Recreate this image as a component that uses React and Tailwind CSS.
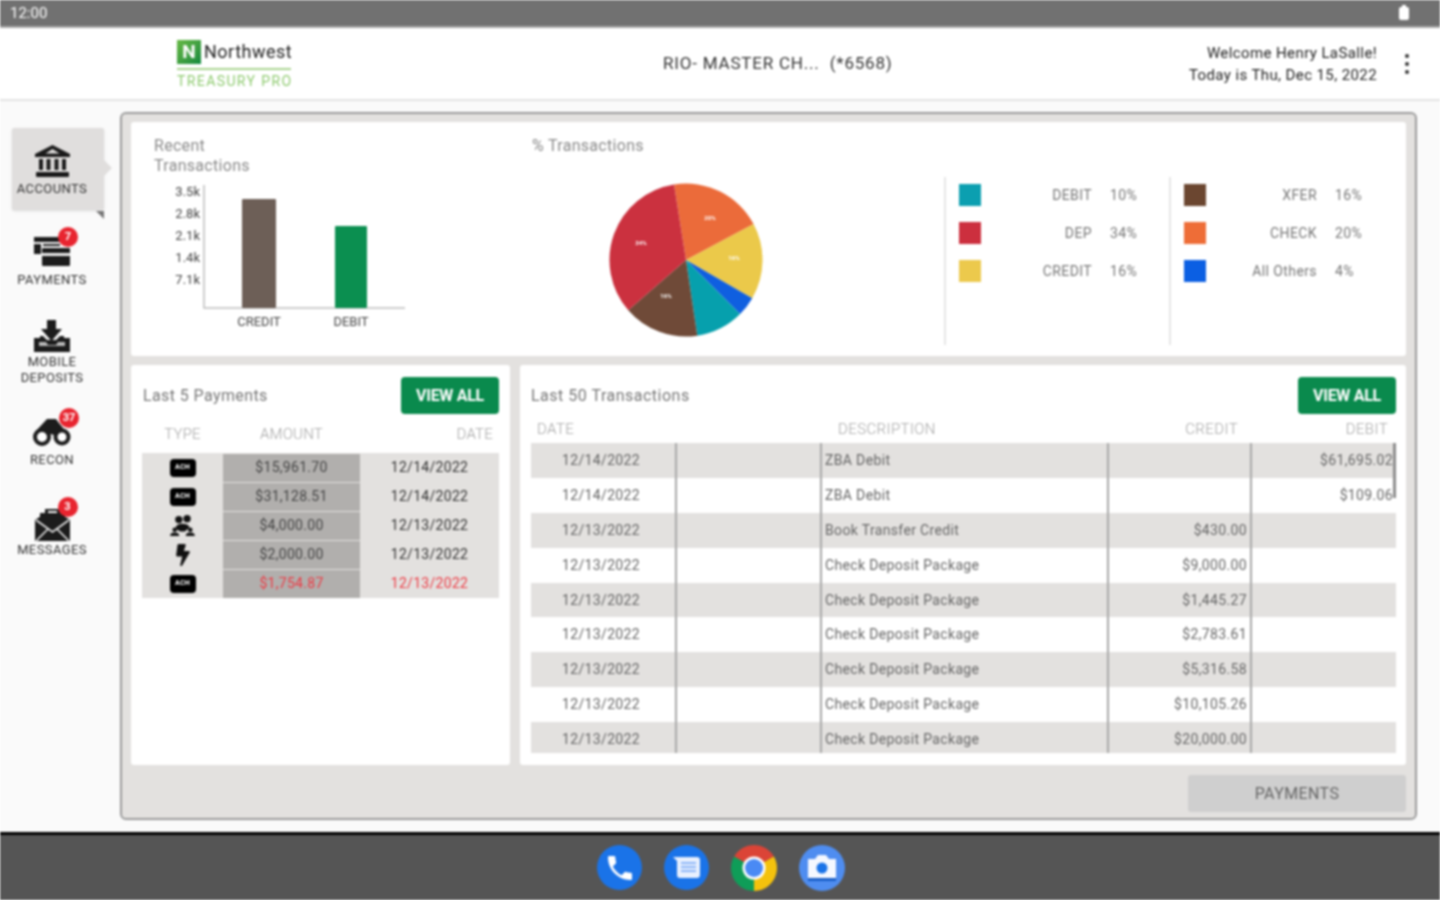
import { FaBolt } from 'react-icons/fa'
import { MdPhone } from 'react-icons/md'

const slices = [
  { from: -9, to: 62, color: '#eb6b3a', label: '20%', at: [24, -40] },
  { from: 62, to: 120, color: '#ebc94a', label: '16%', at: [48, 0] },
  { from: 120, to: 135, color: '#0f5fe0' },
  { from: 135, to: 171.5, color: '#06a0ad' },
  { from: 171.5, to: 229, color: '#6f4a38', label: '16%', at: [-20, 38] },
  { from: 229, to: 351, color: '#cb313f', label: '34%', at: [-45, -15] },
]

const legendA = [
  { color: '#0b9fb0', name: 'DEBIT', pct: '10%' },
  { color: '#cc2f3e', name: 'DEP', pct: '34%' },
  { color: '#ecc94c', name: 'CREDIT', pct: '16%' },
]

const legendB = [
  { color: '#6b4630', name: 'XFER', pct: '16%' },
  { color: '#ee6d37', name: 'CHECK', pct: '20%' },
  { color: '#0b5fe3', name: 'All Others', pct: '4%' },
]

const payments = [
  { type: 'ach', amount: '$15,961.70', date: '12/14/2022' },
  { type: 'ach', amount: '$31,128.51', date: '12/14/2022' },
  { type: 'group', amount: '$4,000.00', date: '12/13/2022' },
  { type: 'bolt', amount: '$2,000.00', date: '12/13/2022' },
  { type: 'ach', amount: '$1,754.87', date: '12/13/2022', red: true },
]

const transactions = [
  ['12/14/2022', 'ZBA Debit', '', '$61,695.02'],
  ['12/14/2022', 'ZBA Debit', '', '$109.06'],
  ['12/13/2022', 'Book Transfer Credit', '$430.00', ''],
  ['12/13/2022', 'Check Deposit Package', '$9,000.00', ''],
  ['12/13/2022', 'Check Deposit Package', '$1,445.27', ''],
  ['12/13/2022', 'Check Deposit Package', '$2,783.61', ''],
  ['12/13/2022', 'Check Deposit Package', '$5,316.58', ''],
  ['12/13/2022', 'Check Deposit Package', '$10,105.26', ''],
  ['12/13/2022', 'Check Deposit Package', '$20,000.00', ''],
]

function slicePath(from, to, r) {
  const rad = (a) => ((a - 90) * Math.PI) / 180
  const x1 = r * Math.cos(rad(from))
  const y1 = r * Math.sin(rad(from))
  const x2 = r * Math.cos(rad(to))
  const y2 = r * Math.sin(rad(to))
  const large = to - from > 180 ? 1 : 0
  return `M0 0 L${x1} ${y1} A${r} ${r} 0 ${large} 1 ${x2} ${y2} Z`
}

function Badge({ n }) {
  return (
    <span className="absolute -top-[9px] -right-[7px] w-[20px] h-[20px] rounded-full bg-[#e8242f] text-white text-[11px] font-bold flex items-center justify-center">
      {n}
    </span>
  )
}

function BankIcon() {
  return (
    <svg width="37" height="33" viewBox="0 0 37 33">
      <path d="M18.5 0L36 9v3H1V9z" fill="#1a1a1a" />
      <path d="M18.5 4l7 4.5h-14z" fill="#e0dedd" />
      <path d="M5 14h4v11H5zM12.5 14h4v11h-4zM20.5 14h4v11h-4zM28 14h4v11h-4z" fill="#1a1a1a" />
      <rect x="2" y="27" width="33" height="5" rx="1" fill="#1a1a1a" />
    </svg>
  )
}

function PaymentsIcon() {
  return (
    <svg width="38" height="30" viewBox="0 0 38 30">
      <path d="M1 1h26v5H1zM1 8h7v10H1zM10 8h17v2H10z" fill="#1c1c1c" />
      <rect x="9" y="12" width="28" height="18" rx="1" fill="#1c1c1c" />
      <rect x="9" y="17" width="28" height="3" fill="#ececec" />
    </svg>
  )
}

function DepositIcon() {
  return (
    <svg width="38" height="32" viewBox="0 0 38 32">
      <path d="M14 0h9v9h6L18.5 21 8 9h6z" fill="#1c1c1c" />
      <path d="M1 18h6v-2h3l4 4h9l4-4h4v2h6v14H1z" fill="#1c1c1c" />
      <path d="M6 22h7l2 3h8l2-3h7v4H6z" fill="#b9b9b9" />
    </svg>
  )
}

function BinocularsIcon() {
  return (
    <svg width="40" height="29" viewBox="0 0 40 29">
      <path d="M3 15L15 2h9l3 4 9 11-9 3-8-3-6 3z" fill="#1c1c1c" />
      <circle cx="10" cy="20" r="7" fill="#fff" stroke="#1c1c1c" strokeWidth="4" />
      <circle cx="30" cy="20" r="6.5" fill="#fff" stroke="#1c1c1c" strokeWidth="4" />
    </svg>
  )
}

function MessagesIcon() {
  return (
    <svg width="37" height="36" viewBox="0 0 37 36">
      <path d="M11 7V3h15v4h5v9H6V7zM14 5v2h9V5z" fill="#1c1c1c" />
      <path d="M1 14l6-4h23l6 4v21H1z" fill="#1c1c1c" />
      <path d="M2 14l16.5 12L35 14M2 35l12-12M35 35L23 23" fill="none" stroke="#e8e8e8" strokeWidth="1.6" />
    </svg>
  )
}

function GroupIcon() {
  return (
    <svg width="25" height="22" viewBox="0 0 27 24">
      <circle cx="9.5" cy="5" r="4" fill="#111" />
      <circle cx="18.5" cy="4" r="4" fill="#111" />
      <path d="M6 15c0-4 3-5.5 7-5.5s8 1 8 4.500l-5 4h-5z" fill="#111" />
      <circle cx="5" cy="16" r="2.5" fill="#111" />
      <circle cx="22" cy="16" r="2.5" fill="#111" />
      <path d="M0 23c0-3 2-4 5-4s5 1 5 4zM17 23c0-3 2-4 5-4s5 1 5 4z" fill="#111" />
    </svg>
  )
}

function TypeIcon({ type }) {
  if (type === 'group') return <GroupIcon />
  if (type === 'bolt') return <FaBolt className="w-[18px] h-[22px] text-[#111]" />
  return (
    <span className="w-[26px] h-[18px] rounded-[4px] bg-black text-white text-[7px] font-bold flex items-center justify-center">
      ACH
    </span>
  )
}

function NavItem({ children, label, badge, className, labelClass }) {
  return (
    <div className={`flex flex-col items-center w-[80px] ${className}`}>
      <div className="relative flex items-center justify-center">
        {children}
        {badge && <Badge n={badge} />}
      </div>
      <div className={`${labelClass} text-[13px] leading-[16px] text-[#333] text-center whitespace-nowrap tracking-[0.4px]`}>{label}</div>
    </div>
  )
}

function Sidebar() {
  return (
    <div className="w-[120px] shrink-0 pt-[27px] pl-[12px]">
      <div className="relative w-[92px] h-[82px] rounded-[2px] bg-[#e0dedd] flex flex-col items-center pt-[17px] pr-[12px] shadow-sm">
        <BankIcon />
        <div className="mt-[4px] text-[13px] leading-[14px] text-[#333] tracking-[0.4px]">ACCOUNTS</div>
        <span className="absolute -right-[8px] top-[32px] border-y-[8px] border-l-[8px] border-y-transparent border-l-[#e0dedd]" />
        <span className="absolute right-0 -bottom-[9px] border-t-[8px] border-l-[8px] border-t-[#777] border-l-transparent" />
      </div>
      <NavItem label="PAYMENTS" badge="7" className="mt-[26px]" labelClass="mt-[6px]">
        <PaymentsIcon />
      </NavItem>
      <NavItem label={<>MOBILE<br />DEPOSITS</>} className="mt-[32px]" labelClass="mt-[2px]">
        <DepositIcon />
      </NavItem>
      <NavItem label="RECON" badge="37" className="mt-[31px]" labelClass="mt-[6px]">
        <BinocularsIcon />
      </NavItem>
      <NavItem label="MESSAGES" badge="3" className="mt-[38px]" labelClass="mt-0">
        <MessagesIcon />
      </NavItem>
    </div>
  )
}

function BarChart() {
  const ticks = ['3.5k', '2.8k', '2.1k', '1.4k', '7.1k']
  return (
    <svg width="270" height="150" viewBox="0 0 270 150" className="absolute left-[22px] top-[60px] font-[Roboto,sans-serif]">
      <path d="M51 3V126H252" fill="none" stroke="#bdbdbd" strokeWidth="1.5" />
      {ticks.map((t, i) => (
        <text key={t} x="47" y={14 + i * 22} textAnchor="end" fontSize="13" fill="#444">{t}</text>
      ))}
      <rect x="89" y="17" width="34" height="109" rx="1" fill="#6d5f57" />
      <rect x="182" y="44" width="32" height="82" rx="1" fill="#0b8f50" />
      <text x="106" y="144" textAnchor="middle" fontSize="13" fill="#444">CREDIT</text>
      <text x="198" y="144" textAnchor="middle" fontSize="13" fill="#444">DEBIT</text>
    </svg>
  )
}

function PieChart() {
  return (
    <svg width="160" height="160" viewBox="-80 -80 160 160">
      {slices.map((s) => (
        <path key={s.color} d={slicePath(s.from, s.to, 76.5)} fill={s.color} />
      ))}
      {slices.filter((s) => s.label).map((s) => (
        <text key={s.color} x={s.at[0]} y={s.at[1]} textAnchor="middle" fontSize="6" fontWeight="700" fill="#fff">{s.label}</text>
      ))}
    </svg>
  )
}

function Legend({ items, width }) {
  return (
    <div className={`${width} border-l-2 border-[#e6e6e6] h-[168px] mt-[55px] pt-[7px] pl-[13px] flex flex-col gap-[16px]`}>
      {items.map((it) => (
        <div key={it.name} className="flex items-center h-[22px] text-[14px] text-[#777] tracking-[0.4px]">
          <span className="w-[22px] h-[22px]" style={{ backgroundColor: it.color }} />
          <span className="w-[111px] text-right">{it.name}</span>
          <span className="ml-[18px]">{it.pct}</span>
        </div>
      ))}
    </div>
  )
}

function ViewAll() {
  return (
    <button className="w-[98px] h-[37px] rounded-[4px] bg-[#0a8a4d] text-white text-[16px] font-bold tracking-[-0.3px] flex items-center justify-center">
      VIEW ALL
    </button>
  )
}

function PaymentsCard() {
  return (
    <div className="w-[379px] bg-white rounded-[3px] pt-[12px] pl-[11px] pr-[11px]">
      <div className="flex items-center justify-between">
        <span className="text-[16px] text-[#777] tracking-[0.4px] pl-[1px]">Last 5 Payments</span>
        <ViewAll />
      </div>
      <div className="grid grid-cols-[81px_137px_139px] mt-[7px] mb-[5px] h-[27px] items-center text-[15px] text-[#a3a3a3] font-light tracking-[0.2px]">
        <span className="text-center">TYPE</span>
        <span className="text-center">AMOUNT</span>
        <span className="text-right pr-[6px]">DATE</span>
      </div>
      <div className="bg-[#e3e1df]">
        {payments.map((p) => (
          <div key={p.amount} className="grid grid-cols-[81px_137px_139px] h-[29px] items-center text-[14px] tracking-[0.3px]">
            <span className="flex justify-center"><TypeIcon type={p.type} /></span>
            <span className={`h-[28px] bg-[#b1afad] flex items-center justify-center ${p.red ? 'text-[#ee3a44]' : 'text-[#444]'}`}>{p.amount}</span>
            <span className={`text-center ${p.red ? 'text-[#ee3a44]' : 'text-[#333]'}`}>{p.date}</span>
          </div>
        ))}
      </div>
    </div>
  )
}

function TransactionsCard() {
  return (
    <div className="flex-1 bg-white rounded-[3px] pt-[12px] pl-[11px] pr-[10px]">
      <div className="flex items-center justify-between">
        <span className="text-[16px] text-[#777] tracking-[0.5px]">Last 50 Transactions</span>
        <ViewAll />
      </div>
      <div className="grid grid-cols-[144px_145px_287px_143px_146px] mt-[3px] mb-[1px] h-[25px] items-center text-[15px] text-[#a3a3a3] font-light tracking-[0.4px]">
        <span className="pl-[6px]">DATE</span>
        <span />
        <span className="pl-[18px]">DESCRIPTION</span>
        <span className="text-right pr-[12px]">CREDIT</span>
        <span className="text-right pr-[8px]">DEBIT</span>
      </div>
      <div className="relative h-[310px] overflow-hidden">
        {transactions.map((t, i) => (
          <div
            key={i}
            className={`grid grid-cols-[144px_145px_287px_143px_146px] h-[34.9px] text-[14px] text-[#666] tracking-[0.35px] ${i % 2 === 0 ? 'bg-[#e3e1df]' : 'bg-white'}`}
          >
            <span className="flex items-center justify-center pr-[4px]">{t[0]}</span>
            <span className="border-l-2 border-[#a8a8a8]" />
            <span className="border-l-2 border-[#a8a8a8] flex items-center pl-[3px]">{t[1]}</span>
            <span className="border-l-2 border-[#a8a8a8] flex items-center justify-end pr-[3px]">{t[2]}</span>
            <span className="border-l-2 border-[#a8a8a8] flex items-center justify-end pr-[3px]">{t[3]}</span>
          </div>
        ))}
        <span className="absolute right-0 top-0 w-[3px] h-[55px] bg-[#8d8d8d]" />
      </div>
    </div>
  )
}

function DockIcons() {
  return (
    <div className="flex items-center justify-center gap-[22px] h-full pl-[2px]">
      <span className="w-[45px] h-[45px] rounded-full bg-[#1a73e8] flex items-center justify-center">
        <MdPhone className="w-[32px] h-[32px] text-white" />
      </span>
      <span className="w-[45px] h-[45px] rounded-full bg-[#1a73e8] flex items-center justify-center">
        <svg width="30" height="26" viewBox="0 0 30 26">
          <path d="M1 2h24a3 3 0 0 1 3 3v15a3 3 0 0 1-3 3H8a3 3 0 0 1-3-3V6z" fill="#e8f0fe" />
          <path d="M9 8h15M9 12h15M9 16h15" stroke="#8ab4f8" strokeWidth="2" />
        </svg>
      </span>
      <svg width="46" height="46" viewBox="-23 -23 46 46">
        <path d="M0 0L-19.9 -11.5A23 23 0 0 1 19.9 -11.5Z" fill="#db4437" />
        <path d="M0 0L19.9 -11.5A23 23 0 0 1 0 23Z" fill="#f4c20d" />
        <path d="M0 0L0 23A23 23 0 0 1 -19.9 -11.5Z" fill="#0f9d58" />
        <circle r="11.5" fill="#fff" />
        <circle r="9" fill="#4a8af4" />
      </svg>
      <span className="w-[46px] h-[46px] rounded-full bg-[#4f8df0] flex items-center justify-center">
        <svg width="32" height="28" viewBox="0 0 32 28">
          <path d="M2 5h7l3-4h8l3 4h7v19H2z" fill="#f5f8ff" />
          <rect x="2" y="24" width="28" height="3" fill="#1a5fc8" />
          <circle cx="16" cy="14" r="5.5" fill="#1a73e8" />
        </svg>
      </span>
    </div>
  )
}

export default function App() {
  return (
    <div className="w-[1440px] h-[900px] overflow-hidden flex flex-col bg-white font-[Roboto,sans-serif] blur-[0.8px]">
      <div className="h-[28px] shrink-0 bg-[#717171] border-b-2 border-[#a9a9a9] flex items-center justify-between pl-[10px] pr-[31px] text-[15px] text-white">
        <span className="pt-[1px]">12:00</span>
        <span className="relative w-[10px] h-[13px] rounded-[2px] bg-white">
          <span className="absolute -top-[2px] left-[3px] w-[4px] h-[2px] bg-white" />
        </span>
      </div>

      <div className="h-[73px] shrink-0 bg-white border-b-2 border-[#e3e3e3] grid grid-cols-[520px_515px_1fr] items-center">
        <div className="pl-[177px] pt-[2px]">
          <div className="flex items-center gap-[3px]">
            <span className="w-[24px] h-[24px] bg-gradient-to-br from-[#66b945] to-[#0a8a3e] flex items-center justify-center text-white font-bold text-[19px] leading-none">N</span>
            <span className="text-[18px] leading-none text-[#222] tracking-[0.5px]">Northwest</span>
          </div>
          <div className="w-[114px] mt-[4px] border-t-2 border-[#a9d48f] pt-[2px] text-[14px] leading-[18px] text-[#8fcb70] tracking-[1.4px] whitespace-nowrap">TREASURY PRO</div>
        </div>
        <div className="text-[17px] text-[#333] tracking-[0.8px] whitespace-nowrap pl-[143px]">RIO- MASTER CH...&nbsp; (*6568)</div>
        <div className="flex items-center justify-end pr-[31px]">
          <div className="text-right text-[15px] leading-[22px] text-[#222] tracking-[0.4px]">
            <div>Welcome Henry LaSalle!</div>
            <div>Today is Thu, Dec 15, 2022</div>
          </div>
          <div className="ml-[28px] flex flex-col gap-[4px]">
            <span className="w-[4px] h-[4px] rounded-full bg-[#333]" />
            <span className="w-[4px] h-[4px] rounded-full bg-[#333]" />
            <span className="w-[4px] h-[4px] rounded-full bg-[#333]" />
          </div>
        </div>
      </div>

      <div className="flex-1 flex bg-[#fafafa] min-h-0">
        <Sidebar />
        <div className="w-[1297px] mt-[11px] mb-[12px] border-2 border-[#9b9b9b] rounded-[6px] bg-[#e3e1df] pt-[8px] px-[9px] flex flex-col">
          <div className="relative h-[234px] shrink-0 bg-white rounded-[3px] flex">
            <div className="w-[389px] pl-[23px] pt-[14px] text-[16px] leading-[20px] text-[#8a8a8a] tracking-[0.3px]">
              Recent<br />Transactions
            </div>
            <BarChart />
            <div className="w-[424px] relative">
              <div className="pl-[12px] pt-[14px] text-[16px] leading-[20px] text-[#8a8a8a] tracking-[0.3px]">% Transactions</div>
              <div className="pl-[86px] pt-[24px]"><PieChart /></div>
            </div>
            <Legend items={legendA} width="w-[225px]" />
            <Legend items={legendB} width="w-[237px]" />
          </div>
          <div className="h-[400px] shrink-0 mt-[9px] flex gap-[10px]">
            <PaymentsCard />
            <TransactionsCard />
          </div>
          <div className="flex justify-end mt-[10px]">
            <div className="w-[218px] h-[37px] rounded-[3px] bg-[#cfcfcf] flex items-center justify-center text-[16px] text-[#666] tracking-[0.4px]">PAYMENTS</div>
          </div>
        </div>
      </div>

      <div className="h-[68px] shrink-0 bg-[#555] border-t-[3px] border-black">
        <DockIcons />
      </div>
    </div>
  )
}
